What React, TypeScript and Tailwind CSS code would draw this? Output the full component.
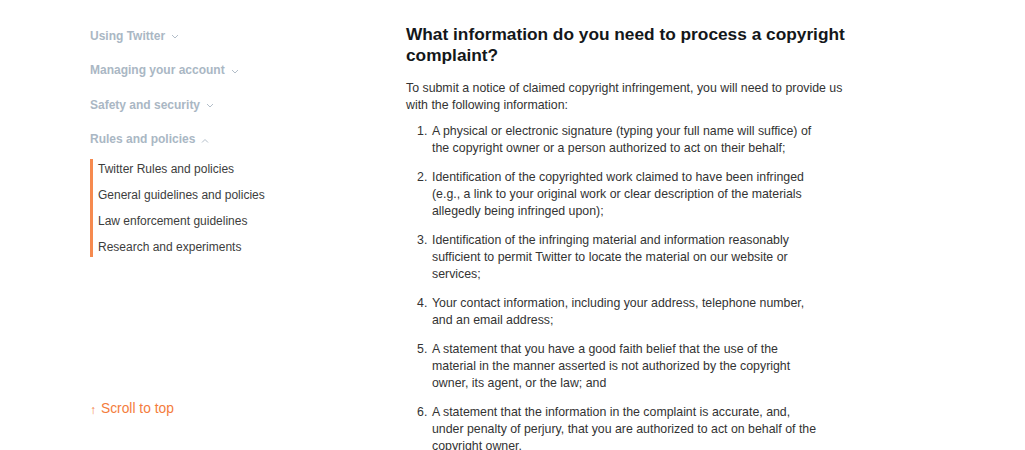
import React from "react";

const Chevron = ({ up }: { up?: boolean }) => (
  <svg width="8" height="5" viewBox="0 0 8 5" className="ml-[6px] mt-[2px]" fill="none">
    <path
      d={up ? "M1 4.5 L4 1.5 L7 4.5" : "M1 1 L4 4 L7 1"}
      stroke="#b3bec9"
      strokeWidth="1"
    />
  </svg>
);

const navTop = [
  { label: "Using Twitter" },
  { label: "Managing your account" },
  { label: "Safety and security" },
];

const sub = [
  "Twitter Rules and policies",
  "General guidelines and policies",
  "Law enforcement guidelines",
  "Research and experiments",
];

const items = [
  "A physical or electronic signature (typing your full name will suffice) of the copyright owner or a person authorized to act on their behalf;",
  "Identification of the copyrighted work claimed to have been infringed (e.g., a link to your original work or clear description of the materials allegedly being infringed upon);",
  "Identification of the infringing material and information reasonably sufficient to permit Twitter to locate the material on our website or services;",
  "Your contact information, including your address, telephone number, and an email address;",
  "A statement that you have a good faith belief that the use of the material in the manner asserted is not authorized by the copyright owner, its agent, or the law; and",
  "A statement that the information in the complaint is accurate, and, under penalty of perjury, that you are authorized to act on behalf of the copyright owner.",
];

export default function App() {
  return (
    <div
      className="w-[1025px] h-[450px] overflow-hidden bg-white flex"
      style={{ fontFamily: '"Liberation Sans", Arial, sans-serif' }}
    >
      <aside className="w-[406px] shrink-0 pl-[90px] pt-[27px] flex flex-col h-full">
        {navTop.map((n) => (
          <div
            key={n.label}
            className="flex items-center h-[17px] mb-[17.5px] text-[12px] font-bold text-[#aab7c4]"
          >
            {n.label}
            <Chevron />
          </div>
        ))}
        <div className="flex items-center h-[17px] text-[12px] font-bold text-[#aab7c4]">
          Rules and policies
          <Chevron up />
        </div>
        <div className="mt-[11px] border-l-[3px] border-[#f68a4f] pl-[5px] w-fit flex flex-col gap-[6px]">
          {sub.map((s) => (
            <div key={s} className="h-[20px] flex items-center text-[12px] text-[#3d3d3d]">
              {s}
            </div>
          ))}
        </div>
        <div className="mt-[145px] flex items-center h-[16px] text-[13.8px] text-[#f47c3c]">
          <span className="text-[12px] mr-[5px] leading-none">↑</span>
          Scroll to top
        </div>
      </aside>
      <main className="pt-[24px] w-[440px] shrink-0">
        <h1 className="text-[17.3px] font-bold leading-[21px] text-[#14171a]">
          What information do you need to process a copyright complaint?
        </h1>
        <p className="mt-[14px] text-[12.35px] leading-[17px] text-[#333333]">
          To submit a notice of claimed copyright infringement, you will need to provide us
          with the following information:
        </p>
        <ol className="mt-[9px] pl-[26px] pr-[24px] text-[12.35px] leading-[17px] text-[#333333]">
          {items.map((t, i) => (
            <li key={i} className="relative mb-[12px]">
              <span className="absolute left-[-15px]">{i + 1}.</span>
              {t}
            </li>
          ))}
        </ol>
      </main>
    </div>
  );
}
